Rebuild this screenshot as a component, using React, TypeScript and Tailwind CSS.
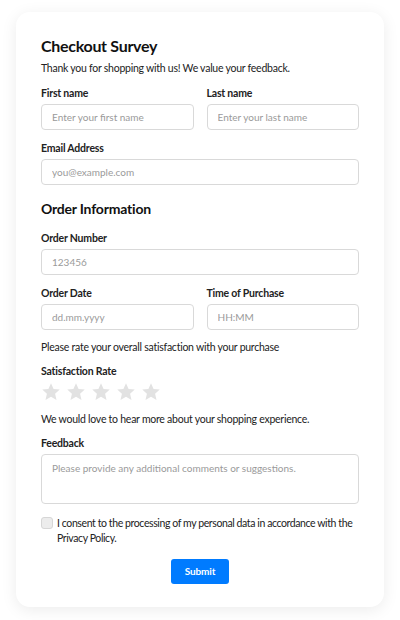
import React from 'react';

const Star = () => (
  <svg width="20" height="20" viewBox="0 0 24 24" fill="#e2e2e2">
    <path d="M12 1.5l3.1 6.9 7.4.7-5.6 5 1.7 7.4L12 17.6l-6.6 3.9 1.7-7.4-5.6-5 7.4-.7z" />
  </svg>
);

const Label = ({ children }: { children: React.ReactNode }) => (
  <label className="block text-[10.5px] leading-4 font-bold tracking-[-0.2px] text-[#222] mb-[3px]">{children}</label>
);

const inputCls =
  'block w-full h-[26px] rounded-[4px] border border-[#d9d9d9] bg-white px-[10px] text-[10px] text-[#333] placeholder:text-[#9a9a9a] outline-none';

export default function App() {
  return (
    <div className="min-h-[620px] bg-white pt-3 px-4 pb-3" style={{ fontFamily: 'Lato, sans-serif' }}>
      <div className="rounded-[14px] bg-white px-[25px] pt-[22px] pb-[23px] shadow-[0_3px_16px_rgba(0,0,0,0.08)]">
        <h1 className="text-[16px] leading-6 font-bold tracking-[-0.3px] text-[#111]">Checkout Survey</h1>
        <p className="mt-[1px] text-[10.5px] leading-[18px] tracking-[-0.25px] text-[#222]">Thank you for shopping with us! We value your feedback.</p>

        <div className="mt-2 grid grid-cols-2 gap-[13px]">
          <div>
            <Label>First name</Label>
            <input className={inputCls} placeholder="Enter your first name" />
          </div>
          <div>
            <Label>Last name</Label>
            <input className={inputCls} placeholder="Enter your last name" />
          </div>
        </div>

        <div className="mt-[10px]">
          <Label>Email Address</Label>
          <input className={inputCls} placeholder="you@example.com" />
        </div>

        <h2 className="mt-[14px] text-[14px] leading-5 font-bold tracking-[-0.2px] text-[#111]">Order Information</h2>

        <div className="mt-[11px]">
          <Label>Order Number</Label>
          <input className={inputCls} placeholder="123456" />
        </div>

        <div className="mt-[10px] grid grid-cols-2 gap-[13px]">
          <div>
            <Label>Order Date</Label>
            <input className={inputCls} placeholder="dd.mm.yyyy" />
          </div>
          <div>
            <Label>Time of Purchase</Label>
            <input className={inputCls} placeholder="HH:MM" />
          </div>
        </div>

        <p className="mt-[9px] text-[10.5px] leading-4 tracking-[-0.25px] text-[#222]">Please rate your overall satisfaction with your purchase</p>

        <div className="mt-2">
          <Label>Satisfaction Rate</Label>
          <div className="flex gap-[5px]">
            {[0, 1, 2, 3, 4].map((i) => (
              <Star key={i} />
            ))}
          </div>
        </div>

        <p className="mt-[9px] text-[10.5px] leading-4 tracking-[-0.25px] text-[#222]">We would love to hear more about your shopping experience.</p>

        <div className="mt-2">
          <Label>Feedback</Label>
          <textarea
            className="block w-full h-[50px] resize-none rounded-[4px] border border-[#d9d9d9] bg-white px-[10px] py-[5px] text-[10px] leading-4 text-[#333] placeholder:text-[#9a9a9a] outline-none"
            placeholder="Please provide any additional comments or suggestions."
          />
        </div>

        <div className="mt-3 flex items-start gap-1">
          <span className="mt-[1px] h-3 w-3 shrink-0 rounded-[3px] border border-[#d6d6d6] bg-[#ececec]" />
          <p className="text-[10.5px] leading-[15px] tracking-[-0.4px] text-[#222]">
            I consent to the processing of my personal data in accordance with the Privacy Policy.
          </p>
        </div>

        <div className="mt-[13px] flex justify-center">
          <button className="h-[25px] w-[58px] rounded-[3px] bg-[#007bff] text-[10px] font-bold tracking-[-0.1px] text-white">Submit</button>
        </div>
      </div>
    </div>
  );
}
